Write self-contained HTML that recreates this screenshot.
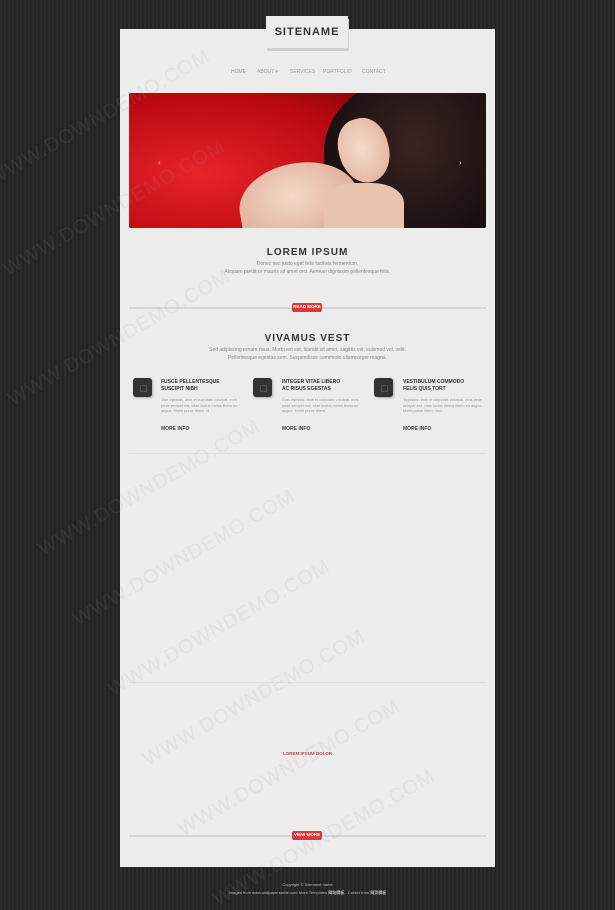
<!DOCTYPE html>
<html><head><meta charset="utf-8"><style>
*{margin:0;padding:0;box-sizing:border-box}
html,body{width:615px;height:910px;overflow:hidden}
body{position:relative;background:#272727;background-image:repeating-linear-gradient(90deg,#2b2b2b 0 2px,#232323 2px 4px);font-family:"Liberation Sans",sans-serif}
.a{position:absolute}
#panel{left:120px;top:29px;width:375px;height:838px;background:#ececec}
#logo{left:266px;top:16px;width:82px;height:32px;background:#ececec;box-shadow:1px 3px 0 #d0d0d0;text-align:center;font-weight:bold;font-size:11px;letter-spacing:1px;color:#333;line-height:32px}
.nav{top:69px;font-size:5px;color:#999}
#slider{left:129px;top:93px;width:357px;height:135px;overflow:hidden;border-radius:2px;background:#c80c14}
.c{text-align:center;width:375px;left:120px}
h2{font-size:10px;letter-spacing:1px;color:#333}
.p{font-size:5px;color:#888;line-height:7.5px}
.line{left:129px;width:357px;height:2px;border-top:1px solid #d6d6d6;border-bottom:1px solid #d6d6d6}
.btn{background:#d63a3a;color:#fff;font-size:4.5px;font-weight:bold;text-align:center;line-height:8px;border-radius:2px;width:30px;height:9px}
.ic{width:19px;height:19px;background:#333;border-radius:3px;box-shadow:1px 1px 2px #aaa}
.ic:after{content:"";position:absolute;left:7px;top:7px;width:5px;height:5px;border:1px solid #555}
.t{font-size:5px;font-weight:bold;color:#333;line-height:7px}
.s{font-size:3.8px;color:#999;line-height:5.5px;width:80px}
.m{font-size:5px;font-weight:bold;color:#444}
.wm{font-size:20px;color:rgba(160,160,160,.12);transform:rotate(-30deg);transform-origin:left;white-space:nowrap;letter-spacing:1px;font-family:"Liberation Sans Narrow","Liberation Sans",sans-serif}
</style></head><body>
<div id="panel" class="a"></div>
<div id="logo" class="a">SITENAME</div>
<div class="a nav" style="left:231px">HOME</div>
<div class="a nav" style="left:257px">ABOUT ▾</div>
<div class="a nav" style="left:290px">SERVICES</div>
<div class="a nav" style="left:323px">PORTFOLIO</div>
<div class="a nav" style="left:362px">CONTACT</div>
<div id="slider" class="a">
<div class="a" style="left:0;top:0;width:240px;height:135px;background:radial-gradient(ellipse at 30% 60%,#e8232a,#b8080f 70%,#8a0309)"></div>
<div class="a" style="left:195px;top:-15px;width:185px;height:165px;background:radial-gradient(ellipse at 50% 40%,#3a2422,#1a0f10 70%);border-radius:45% 0 0 30%"></div>
<div class="a" style="left:110px;top:70px;width:120px;height:80px;background:radial-gradient(ellipse at 45% 40%,#f5d8c8,#e0b09a 70%);border-radius:50% 50% 0 0;transform:rotate(-10deg)"></div>
<div class="a" style="left:210px;top:25px;width:50px;height:65px;background:radial-gradient(ellipse at 45% 45%,#f6dccd,#e3b7a2 75%);border-radius:45% 45% 50% 50%;transform:rotate(-15deg)"></div>
<div class="a" style="left:195px;top:90px;width:80px;height:50px;background:#e8c4b0;border-radius:40% 40% 0 0"></div>
<div class="a" style="left:29px;top:65px;font-size:8px;color:#fcc">‹</div>
<div class="a" style="left:330px;top:65px;font-size:8px;color:#ccc">›</div>
</div>
<div class="a c" style="top:247px"><h2>LOREM IPSUM</h2></div>
<div class="a c p" style="top:261px">Donec nec justo eget felis facilisis fermentum.<br>Aliquam porttit or mauris sit amet orci. Aenean dignissim pellentesque felis.</div>
<div class="a line" style="top:307px"></div>
<div class="a btn" style="left:292px;top:303px">READ MORE</div>
<div class="a c" style="top:333px"><h2>VIVAMUS VEST</h2></div>
<div class="a c p" style="top:347px">Sed adipiscing ornare risus. Morbi est est, blandit sit amet, sagittis vel, euismod vel, velit.<br>Pellentesque egestas sem. Suspendisse commodo ullamcorper magna.</div>
<div class="a ic" style="left:133px;top:378px"></div>
<div class="a ic" style="left:253px;top:378px"></div>
<div class="a ic" style="left:374px;top:378px"></div>
<div class="a t" style="left:161px;top:379px">FUSCE PELLENTESQUE<br>SUSCIPIT NIBH</div>
<div class="a t" style="left:282px;top:379px">INTEGER VITAE LIBERO<br>AC RISUS EGESTAS</div>
<div class="a t" style="left:403px;top:379px">VESTIBULUM COMMODO<br>FELIS QUIS TORT</div>
<div class="a s" style="left:161px;top:398px">Vide egestas, ante et vulputate volutpat, eros pede semper est, vitae luctus metus libero eu augue. Morbi purus libero, id</div>
<div class="a s" style="left:282px;top:398px">Cras egestas, ante et vulputate volutpat, eros pede semper est, vitae luctus metus libero eu augue. Morbi purus libero.</div>
<div class="a s" style="left:403px;top:398px">Tugestas, ante et vulputate volutpat, eros pede semper est, vitae luctus metus libero eu augue. Morbi purus libero, faur.</div>
<div class="a m" style="left:161px;top:426px">MORE INFO</div>
<div class="a m" style="left:282px;top:426px">MORE INFO</div>
<div class="a m" style="left:403px;top:426px">MORE INFO</div>
<div class="a" style="left:129px;top:453px;width:357px;border-top:1px solid #e0e0e0"></div>
<div class="a" style="left:129px;top:682px;width:357px;border-top:1px solid #e0e0e0"></div>
<div class="a c" style="top:751px;font-size:4.5px;font-weight:bold;color:#c94444">LOREM IPSUM DOLOR</div>
<div class="a line" style="top:835px"></div>
<div class="a btn" style="left:292px;top:831px">VIEW MORE</div>
<div class="a c" style="top:882px;font-size:4px;color:#bbb">Copyright © Sitename.name</div>
<div class="a c" style="top:890px;font-size:4px;color:#bbb">Images from www.wallpaperswide.com More Templates <b>网站模板</b> - Collect from <b>网页模板</b></div>
<div class="a wm" style="left:-10px;top:170px">WWW.DOWNDEMO.COM</div>
<div class="a wm" style="left:5px;top:260px">WWW.DOWNDEMO.COM</div>
<div class="a wm" style="left:10px;top:390px">WWW.DOWNDEMO.COM</div>
<div class="a wm" style="left:40px;top:540px">WWW.DOWNDEMO.COM</div>
<div class="a wm" style="left:75px;top:610px">WWW.DOWNDEMO.COM</div>
<div class="a wm" style="left:110px;top:680px">WWW.DOWNDEMO.COM</div>
<div class="a wm" style="left:145px;top:750px">WWW.DOWNDEMO.COM</div>
<div class="a wm" style="left:180px;top:820px">WWW.DOWNDEMO.COM</div>
<div class="a wm" style="left:215px;top:890px">WWW.DOWNDEMO.COM</div>
</body></html>
